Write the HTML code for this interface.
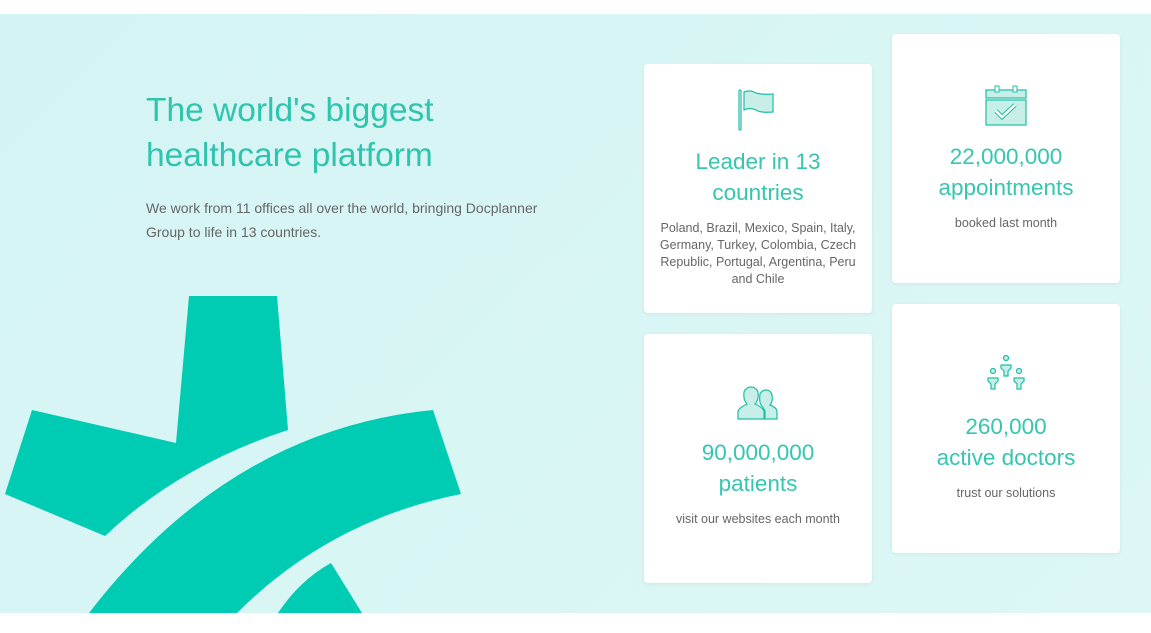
<!DOCTYPE html>
<html><head><style>
body{margin:0;width:1151px;height:633px;background:#fff;font-family:"Liberation Sans",sans-serif;overflow:hidden;position:relative}
.sec{position:absolute;left:0;top:14px;width:1151px;height:599px;background:linear-gradient(135deg,#d4f4f4,#dcf7f5);overflow:hidden}
h1{position:absolute;left:146px;top:74px;margin:0;font-weight:300;font-size:33.5px;line-height:45px;color:#2ec4ad;white-space:nowrap}
p.intro{position:absolute;left:146px;top:182px;margin:0;font-size:14px;line-height:24px;color:#666;width:400px}
.card{position:absolute;width:228px;height:249px;background:#fff;border-radius:4px;box-shadow:0 1px 4px rgba(0,0,0,.06);text-align:center}
.card svg{position:absolute;left:50%;transform:translateX(-50%)}
.t{position:absolute;left:0;right:0;font-size:22.5px;line-height:31px;color:#35c6b0;font-weight:300}
.s{position:absolute;left:10px;right:10px;font-size:12.5px;line-height:17px;color:#666}
</style></head><body>
<div class="sec">
<svg width="1151" height="599" style="position:absolute;left:0;top:0">
<g fill="#00cbb3" transform="translate(0,-14)">
<path d="M32 410 L176 443 L189 296 L277 296 L288 430 Q180 465 105 536 L5 494 Z"/>
<path d="M433 410 L461 494 Q330 520 237 613 L89 613 Q230 430 433 410 Z"/>
<path d="M331 563 L362 613 L278 613 Q300 580 331 563 Z"/>
</g></svg>
<h1>The world's biggest<br>healthcare platform</h1>
<p class="intro">We work from 11 offices all over the world, bringing Docplanner Group to life in 13 countries.</p>

<div class="card" style="left:644px;top:50px">
<svg style="top:25px" width="40" height="42" viewBox="0 0 40 42"><rect x="1" y="1" width="2" height="40" rx="1" fill="none" stroke="#1dbfa6" stroke-width="1.2"/><path d="M6 3 Q12 1 16 3 Q20 6 35 5 L35 23 Q22 24 18 21 Q12 18 6 21 Z" fill="#c8eee8" stroke="#1dbfa6" stroke-width="1.2"/></svg>
<div class="t" style="top:82px">Leader in 13<br>countries</div>
<div class="s" style="top:156px">Poland, Brazil, Mexico, Spain, Italy, Germany, Turkey, Colombia, Czech Republic, Portugal, Argentina, Peru and Chile</div>
</div>
<div class="card" style="left:892px;top:20px">
<svg style="top:50px" width="42" height="42" viewBox="0 0 42 42"><rect x="1" y="6" width="40" height="8" fill="#c8eee8" stroke="#1dbfa6" stroke-width="1.2"/><rect x="10" y="2" width="4" height="6" fill="#fff" stroke="#1dbfa6"/><rect x="28" y="2" width="4" height="6" fill="#fff" stroke="#1dbfa6"/><rect x="1" y="16" width="40" height="25" fill="#c8eee8" stroke="#1dbfa6" stroke-width="1.2"/><path d="M11 27 L17 33 L30 21" fill="none" stroke="#1dbfa6" stroke-width="4.5"/><path d="M11 27 L17 33 L30 21" fill="none" stroke="#fff" stroke-width="2.5"/></svg>
<div class="t" style="top:107px">22,000,000<br>appointments</div>
<div class="s" style="top:181px">booked last month</div>
</div>
<div class="card" style="left:644px;top:320px">
<svg style="top:52px" width="42" height="34" viewBox="0 0 42 34"><path d="M1 33 L1 25 Q3 21 10 18 Q6 14 7 6 Q9 1 14 1 Q19 1 21 6 Q22 14 18 18 Q25 21 27 25 L27 33 Z" fill="#c8eee8" stroke="#1dbfa6" stroke-width="1.2"/><path d="M28 33 L28 25 Q26 21 24 19 Q22 15 23 8 Q25 4 29 4 Q34 4 35 9 Q36 16 33 19 Q39 21 40 25 L40 33 Z" fill="#c8eee8" stroke="#1dbfa6" stroke-width="1.2"/></svg>
<div class="t" style="top:103px">90,000,000<br>patients</div>
<div class="s" style="top:177px">visit our websites each month</div>
</div>
<div class="card" style="left:892px;top:290px">
<svg style="top:51px" width="40" height="40" viewBox="0 0 40 40"><g fill="#c8eee8" stroke="#1dbfa6" stroke-width="1.2"><circle cx="20" cy="3" r="2.5"/><circle cx="7" cy="16" r="2.5"/><circle cx="33" cy="16" r="2.5"/><path d="M15 10 H25 V13 L22 16 V21 H18 V16 L15 13 Z"/><path d="M2 23 H12 V26 L9 29 V34 H5 V29 L2 26 Z"/><path d="M28 23 H38 V26 L35 29 V34 H31 V29 L28 26 Z"/></g></svg>
<div class="t" style="top:107px">260,000<br>active doctors</div>
<div class="s" style="top:181px">trust our solutions</div>
</div>
</div>
</body></html>
